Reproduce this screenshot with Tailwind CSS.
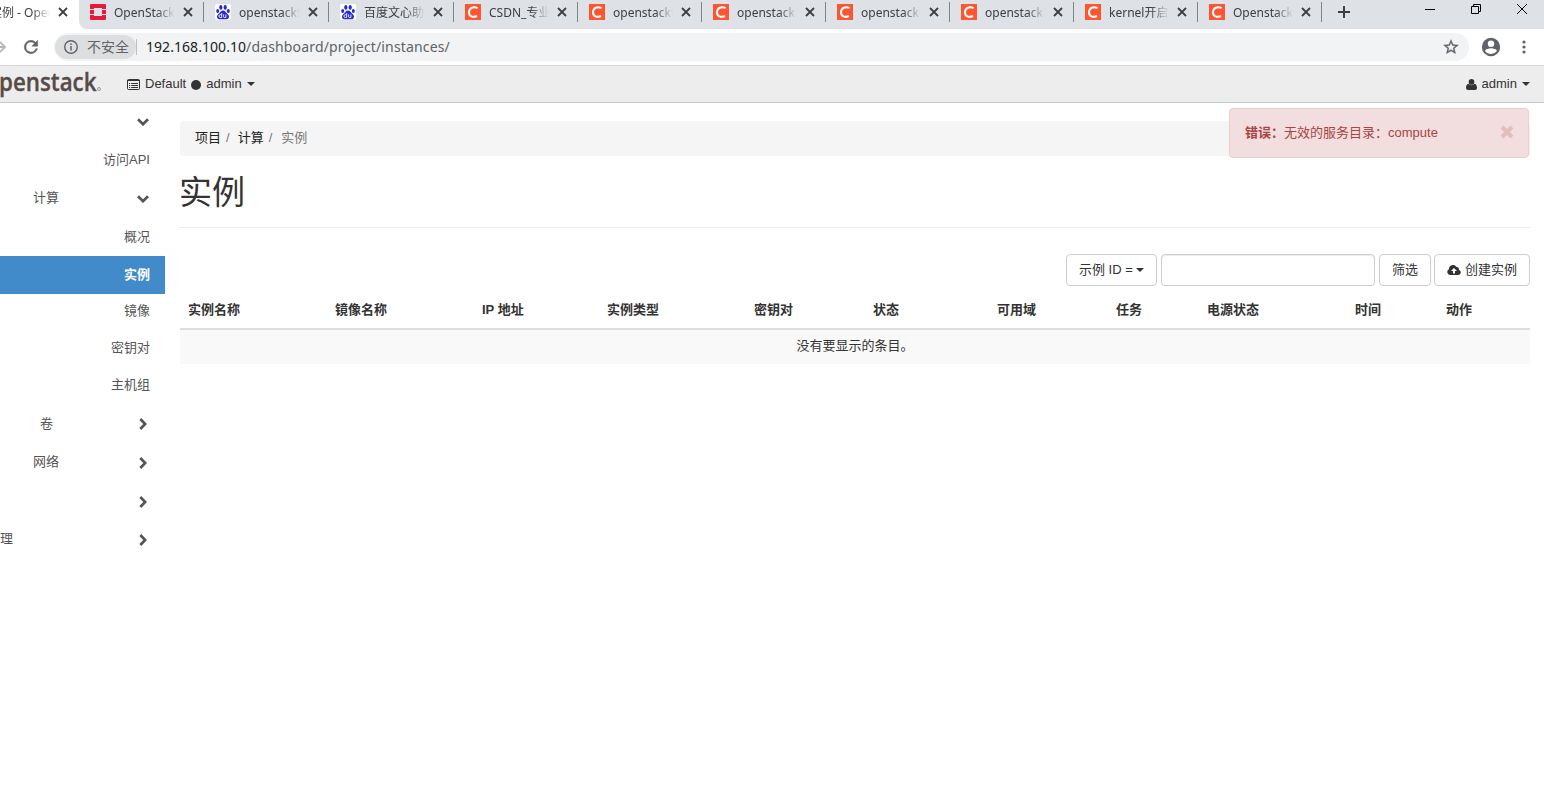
<!DOCTYPE html>
<html lang="zh-CN">
<head>
<meta charset="utf-8">
<title>实例 - OpenStack Dashboard</title>
<script src="https://cdn.jsdelivr.net/npm/@tailwindcss/browser@4"></script>
</head>
<body class="h-[812px] w-[1544px] overflow-hidden bg-white font-['Liberation_Sans','Noto_Sans_CJK_SC',sans-serif] text-[13px] leading-[18px] text-[#333]">
<svg class="hidden">
  <symbol id="x" viewBox="0 0 10 10"><path d="M1 1l8 8M9 1l-8 8" fill="none" stroke="#3c4043" stroke-width="1.8"/></symbol>
  <symbol id="os" viewBox="0 0 16 16"><path fill="#e61b39" d="M1 0h14a1 1 0 0 1 1 1v4h-4V4H4v1H0V1a1 1 0 0 1 1-1zM0 6h4v4H0zM12 6h4v4h-4zM0 11h4v1h8v-1h4v4a1 1 0 0 1-1 1H1a1 1 0 0 1-1-1z"/></symbol>
  <symbol id="paw" viewBox="0 0 16 16"><rect width="16" height="16" rx="2" fill="#fff"/><g fill="#2529d8"><ellipse cx="5.8" cy="3.4" rx="1.6" ry="2.3"/><ellipse cx="10.2" cy="3.4" rx="1.6" ry="2.3"/><ellipse cx="2.7" cy="7" rx="1.5" ry="2.1"/><ellipse cx="13.3" cy="7" rx="1.5" ry="2.1"/><path d="M8 6.5c2 0 2.6 1.8 4 3.1 1.7 1.5 2.4 2.7 1.8 4.2-.7 1.9-3 1.5-5.8 1.4-2.800.1-5.100.5-5.800-1.400-.6-1.500.1-2.700 1.800-4.200 1.400-1.300 2-3.100 4-3.100z"/></g><path d="M6.700 9v4.500H5.300a1.200 1.200 0 0 1 0-2.800h1.400M8.600 10.500v2.200q0 .8.8.8h1.500v-3" fill="none" stroke="#fff" stroke-width=".9"/></symbol>
  <symbol id="c" viewBox="0 0 16 16"><path fill="#fc5531" d="M0 0h16v16H0z"/><path d="M12.600 4.100C8.500 2.300 4.300 3.600 4 8c-.2 4.500 3.800 5.800 8 4" fill="none" stroke="#fff" stroke-width="2"/></symbol>
  <symbol id="down" viewBox="0 0 12 8"><path d="M1 1.300l5 4.900 5-4.900" fill="none" stroke="#555" stroke-width="2.700"/></symbol>
  <symbol id="right" viewBox="0 0 8 12"><path d="M1.300 1l4.900 5-4.900 5" fill="none" stroke="#555" stroke-width="2.700"/></symbol>
</svg>

<!-- browser tab strip -->
<header class="flex h-[29px] bg-[#dee1e6] font-['Noto_Sans','Noto_Sans_CJK_SC',sans-serif] text-[12px] leading-[16px] text-[#3c4043]">
  <div class="w-[90px] shrink-0 bg-white"><div class="relative h-full w-[79px]">
    <div class="absolute left-[-10px] top-[5px] w-[60px] overflow-hidden whitespace-nowrap [mask-image:linear-gradient(to_right,#000_70%,transparent)]">实例 - OpenStack</div>
    <svg class="absolute left-[58px] top-[7px] size-[10px]"><use href="#x"/></svg>
  </div></div>
  <div id="tabs" class="-ml-[11px] flex rounded-bl-[8px] bg-[#dee1e6]"></div>
  <svg class="ml-[16px] mt-[6px] size-[12px]" viewBox="0 0 12 12"><path d="M6 0v12M0 6h12" stroke="#3c4043" stroke-width="2"/></svg>
  <div class="ml-auto mr-[16px] flex gap-[35px] pt-[3px]">
    <svg class="ml-px size-[11px]" viewBox="0 0 11 11"><path d="M0 6.500h10" stroke="#000"/></svg>
    <svg class="size-[11px]" viewBox="0 0 11 11"><path d="M.5 3.500h7v7h-7zM2.500 3.500v-2h7v7h-2" fill="none" stroke="#000"/></svg>
    <svg class="-ml-px size-[12px]" viewBox="0 0 12 12"><path d="M1 1l10 10M11 1L1 11" stroke="#000"/></svg>
  </div>
</header>

<!-- address bar -->
<div class="flex h-[37px] items-center border-b border-[#d5d7da] bg-white font-['Noto_Sans','Noto_Sans_CJK_SC',sans-serif] text-[14px] leading-[20px]">
  <svg class="h-[12px] w-[6px] shrink-0" viewBox="0 0 6 12"><path d="M0 1l5 5-5 5M0 6h5" fill="none" stroke="#b5b7ba" stroke-width="1.800"/></svg>
  <svg class="ml-[15px] size-[20px] shrink-0" viewBox="0 0 24 24"><path fill="#5f6368" stroke="#5f6368" stroke-width=".6" d="M17.650 6.350A7.950 7.950 0 0 0 12 4a8 8 0 1 0 7.730 10h-2.080A6 6 0 1 1 12 6c1.660 0 3.140.69 4.220 1.780L13 11h7V4z"/></svg>
  <div class="ml-[13px] flex h-[28px] w-[1415px] items-center rounded-full bg-[#f1f3f4]">
    <div class="flex h-[24px] w-[81px] items-center rounded-full bg-[#dddee0] pl-[8px] text-[#5f6368] ml-px">
      <svg class="size-[16px]" viewBox="0 0 16 16"><circle cx="8" cy="8" r="6.300" fill="none" stroke="#5f6368" stroke-width="1.400"/><path d="M8 7v4.500M8 4.500V6" stroke="#5f6368" stroke-width="1.500"/></svg>
      <span class="ml-[8px] whitespace-nowrap">不安全</span>
    </div>
    <span class="h-[16px] w-px bg-[#bdc1c6]"></span>
    <span class="ml-[9px] whitespace-nowrap tracking-[0.155px] text-[#5f6368]"><span class="tracking-[0.05px] text-[#202124]">192.168.100.10</span>/dashboard/project/instances/</span>
    <svg class="ml-auto mr-[9px] size-[18px]" viewBox="0 0 24 24"><path fill="#5f6368" stroke="#5f6368" stroke-width=".4" d="M22 9.240l-7.190-.62L12 2 9.190 8.630 2 9.240l5.460 4.730L5.820 21 12 17.270 18.180 21l-1.630-7.030zM12 15.400l-3.760 2.270 1-4.280-3.320-2.880 4.380-.38L12 6.100l1.710 4.040 4.380.38-3.320 2.880 1 4.280z"/></svg>
  </div>
  <svg class="ml-[11px] size-[22px]" viewBox="0 0 24 24"><path fill="#5f6368" fill-rule="evenodd" d="M12 2a10 10 0 1 0 0 20 10 10 0 0 0 0-20zm0 3a3.500 3.500 0 1 1 0 7 3.500 3.500 0 0 1 0-7zm0 14.500c-2.700 0-5-1.200-6.500-3.200.3-2 4.300-3 6.500-3s6.200 1 6.500 3a8 8 0 0 1-6.500 3.200z"/></svg>
  <svg class="ml-[20px] h-[14px] w-[4px]" viewBox="0 0 4 14" fill="#5f6368"><circle cx="2" cy="2" r="1.600"/><circle cx="2" cy="7" r="1.600"/><circle cx="2" cy="12" r="1.600"/></svg>
</div>

<!-- dashboard navigation -->
<nav class="flex h-[37px] items-center border-b border-[#c8c8c8] bg-[#ededed]">
  <svg class="h-[36px] w-[127px] shrink-0" viewBox="0 0 127 36"><text x="-1" y="24.500" textLength="97.500" lengthAdjust="spacingAndGlyphs" class="font-['Open_Sans',sans-serif] text-[24.500px] font-semibold" fill="#564c47" stroke="#564c47" stroke-width=".35">penstack</text><circle cx="99" cy="23" r="1.500" fill="none" stroke="#8d8683" stroke-width=".8"/></svg>
  <svg class="h-[11px] w-[13px] shrink-0" viewBox="0 0 13 11"><rect x=".5" y=".5" width="12" height="10" rx="1" fill="none" stroke="#333"/><path d="M0 1.500h13" stroke="#333"/><path d="M2 4.500h1.200M2 6.500h1.200M2 8.500h1.200M4.200 4.500H11M4.200 6.500H11M4.200 8.500H11" stroke="#333"/></svg>
  <span class="ml-[5px]">Default</span>
  <span class="ml-[5px] mt-[2px] size-[10px] rounded-full bg-[#333]"></span>
  <span class="ml-[5px]">admin</span>
  <svg class="ml-[5px] h-[4px] w-[8px]" viewBox="0 0 8 4"><path d="M0 0h8L4 4z" fill="#333"/></svg>
  <svg class="ml-auto h-[11px] w-[11px]" viewBox="0 0 11 11" fill="#333"><circle cx="5.500" cy="2.900" r="2.800"/><path d="M2.500 4.800C.7 5.300 0 7 0 9q0 2 2 2h7q2 0 2-2c0-2-.7-3.700-2.500-4.200a4 4 0 0 1-6 0z"/></svg>
  <span class="ml-[5px]">admin</span>
  <svg class="ml-[5px] mr-[14px] h-[4px] w-[8px]" viewBox="0 0 8 4"><path d="M0 0h8L4 4z" fill="#333"/></svg>
</nav>

<div class="relative flex">
  <!-- sidebar -->
  <aside class="w-[165px] shrink-0 text-[#555]">
    <div class="flex h-[38px] items-center justify-end pr-[16px]"><svg class="h-[8px] w-[12px]"><use href="#down"/></svg></div>
    <div class="flex h-[38px] items-center justify-end pr-[15px]">访问API</div>
    <div class="flex h-[39px] items-center justify-between pl-[33px] pr-[16px]"><span class="mb-[2px]">计算</span><svg class="h-[8px] w-[12px]"><use href="#down"/></svg></div>
    <div class="flex h-[38px] items-center justify-end pr-[15px]">概况</div>
    <div class="flex h-[38px] items-center justify-end bg-[#428bca] pb-px pr-[15px] font-bold text-white">实例</div>
    <div class="flex h-[36px] items-center justify-end pb-[2px] pr-[15px]">镜像</div>
    <div class="flex h-[37px] items-center justify-end pb-[2px] pr-[15px]">密钥对</div>
    <div class="flex h-[38px] items-center justify-end pb-[2px] pr-[15px]">主机组</div>
    <div class="flex h-[38px] items-center justify-between pl-[40px] pr-[18px]"><span>卷</span><svg class="h-[12px] w-[8px]"><use href="#right"/></svg></div>
    <div class="flex h-[39px] items-center justify-between pl-[33px] pr-[18px]"><span class="mb-[2px]">网络</span><svg class="h-[12px] w-[8px]"><use href="#right"/></svg></div>
    <div class="flex h-[38px] items-center justify-end pr-[18px]"><svg class="mt-px h-[12px] w-[8px]"><use href="#right"/></svg></div>
    <div class="flex h-[38px] items-center justify-between pr-[18px]"><span>理</span><svg class="mt-[2px] h-[12px] w-[8px]"><use href="#right"/></svg></div>
  </aside>

  <!-- content -->
  <main class="ml-[15px] w-[1350px] pt-[18px]">
    <div class="flex h-[35px] items-center rounded-[4px] bg-[#f5f5f5] pb-px pl-[15px] text-[#222]"><span>项目</span><span class="mx-[5px] text-[#777]">/</span><span class="ml-[3px]">计算</span><span class="mx-[5px] text-[#777]">/</span><span class="ml-[4px] text-[#777]">实例</span></div>
    <h1 class="-ml-px h-[72px] w-[1351px] pt-[17px] text-[33px] leading-[40px] shadow-[inset_0_-1px_0_#eee]">实例</h1>
    <div class="mt-[26px] flex h-[32px] justify-end">
      <div class="flex w-[91px] items-center rounded-[4px] border border-[#ccc] pb-px pl-[12px] whitespace-nowrap">示例 ID =<svg class="ml-[3px] mt-px h-[4px] w-[8px]" viewBox="0 0 8 4"><path d="M0 0h8L4 4z" fill="#333"/></svg></div>
      <input class="ml-[4px] w-[214px] rounded-[4px] border border-[#ccc] shadow-[inset_0_1px_1px_rgba(0,0,0,0.075)]">
      <div class="ml-[4px] flex w-[52px] items-center justify-center rounded-[4px] border border-[#ccc] pb-px">筛选</div>
      <div class="ml-[3px] flex w-[96px] items-center justify-center rounded-[4px] border border-[#ccc] pb-px whitespace-nowrap"><svg class="mr-[4px] h-[10px] w-[14px]" viewBox="0 0 14 10"><path fill="#333" fill-rule="evenodd" d="M3 10a3 3 0 0 1-1-5.700A4 4 0 0 1 9.500 2.100a2 2 0 0 1 2.300 2.600A2.700 2.700 0 0 1 11.300 10zM7 3L4 6h2v2.500h2V6h2z"/></svg>创建实例</div>
    </div>
    <table class="mt-[6px] w-[1350px] table-fixed border-collapse">
      <colgroup><col class="w-[147px]"><col class="w-[147px]"><col class="w-[125px]"><col class="w-[147px]"><col class="w-[119px]"><col class="w-[124px]"><col class="w-[119px]"><col class="w-[91px]"><col class="w-[148px]"><col class="w-[91px]"><col class="w-[92px]"></colgroup>
      <thead><tr class="h-[37px] border-b-2 border-[#ddd] text-left [&>th]:pl-[8px]"><th>实例名称</th><th>镜像名称</th><th>IP 地址</th><th>实例类型</th><th>密钥对</th><th>状态</th><th>可用域</th><th>任务</th><th>电源状态</th><th>时间</th><th>动作</th></tr></thead>
      <tbody><tr class="h-[35px] bg-[#f9f9f9]"><td colspan="11" class="pb-[2px] text-center">没有要显示的条目。</td></tr></tbody>
    </table>
  </main>

  <div class="absolute left-[1229px] top-[5px] flex h-[50px] w-[300px] items-center rounded-[4px] border border-[#ebccd1] bg-[#f2dede] pl-[15px] pr-[14px] text-[#a94442]"><b>错误：</b><span>无效的服务目录：compute</span><svg class="ml-auto mb-[3px] h-[14px] w-[14px]" viewBox="0 0 14 14"><path d="M2 2l10 10M12 2L2 12" stroke="#e4bcbc" stroke-width="4"/></svg></div>
</div>

<template id="tab">
  <div class="group flex h-[29px] w-[124px] shrink-0 items-start pl-[11px] nth-[-n+3]:w-[125px]"><svg class="mt-[4px] size-[16px] shrink-0"><use/></svg><span class="ml-[8px] mt-[5px] w-[61px] overflow-hidden whitespace-nowrap [mask-image:linear-gradient(to_right,#000_70%,transparent)] group-nth-[n+4]:w-[60px]"></span><svg class="ml-[8px] mt-[7px] size-[10px] shrink-0"><use href="#x"/></svg><i class="ml-auto mt-[2px] h-[20px] w-px bg-[#808488]"></i></div>
</template>
<script>
const tabs = [['os','OpenStack 云'],['paw','openstack创建'],['paw','百度文心助手'],['c','CSDN_专业开发'],['c','openstack创建'],['c','openstack 实例'],['c','openstack 实例'],['c','openstack实例'],['c','kernel开启虚拟'],['c','Openstack 实例']];
for (const [icon, title] of tabs) {
  const node = document.getElementById('tab').content.cloneNode(true);
  node.querySelector('use').setAttribute('href', '#' + icon);
  node.querySelector('span').textContent = title;
  document.getElementById('tabs').append(node);
}
</script>
</body>
</html>
